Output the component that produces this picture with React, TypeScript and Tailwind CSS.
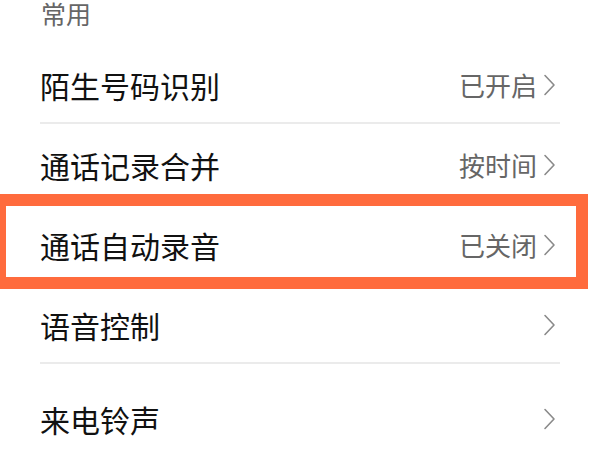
import React from "react";

const Chevron = () => (
  <svg width="13" height="22" viewBox="0 0 13 22" className="shrink-0">
    <path d="M2 1.5 L11 11 L2 20.5" fill="none" stroke="#8a8a8a" strokeWidth="1.6" strokeLinecap="round" strokeLinejoin="round" />
  </svg>
);

type Row = { title: string; value?: string };

const rows: Row[] = [
  { title: "陌生号码识别", value: "已开启" },
  { title: "通话记录合并", value: "按时间" },
  { title: "通话自动录音", value: "已关闭" },
  { title: "语音控制" },
];

export default function App() {
  return (
    <div
      className="relative w-[600px] h-[450px] overflow-hidden bg-white"
      style={{ fontFamily: '"Noto Sans CJK SC", "Noto Sans", sans-serif' }}
    >
      <div className="h-[44px] pl-[41px] text-[25px] leading-[27px] text-[#666666]">常用</div>
      {rows.map((r, i) => (
        <div key={i} className="ml-[40px] mr-[40px] h-[80px] border-b-2 border-[#ebebeb] flex items-center pt-[4px]">
          <div className="flex-1 text-[30px] leading-[36px] text-[#111111]">{r.title}</div>
          <div className="flex items-center gap-[6px] mr-[4px]">
            {r.value && <span className="text-[26px] leading-[30px] text-[#666666]">{r.value}</span>}
            <Chevron />
          </div>
        </div>
      ))}
      <div className="ml-[40px] mr-[40px] h-[100px] flex items-center pt-[10px]">
        <div className="flex-1 text-[30px] leading-[36px] text-[#111111]">来电铃声</div>
        <div className="flex items-center mr-[4px]">
          <Chevron />
        </div>
      </div>
      <div className="absolute left-[-6px] top-[194px] w-[594px] h-[95px] border-[12px] border-[#ff6b3d]" />
    </div>
  );
}
